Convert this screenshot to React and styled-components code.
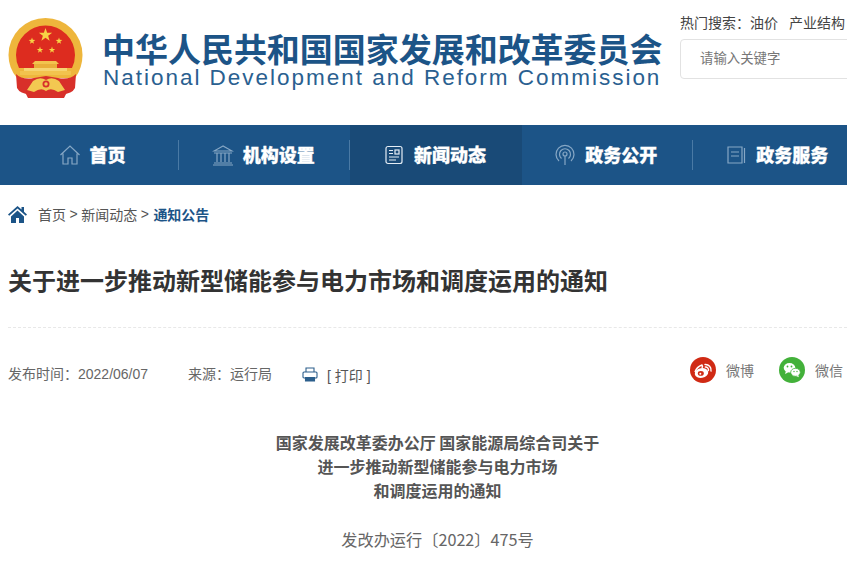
import React from 'react';
import styled, { createGlobalStyle } from 'styled-components';

const CJK = '"Noto Sans CJK SC", "Liberation Sans", sans-serif';
const Global = createGlobalStyle`
  html, body { margin: 0; padding: 0; background: #fff; }
  body { font-family: ${CJK}; overflow: hidden; }
`;
const Page = styled.div`width: 847px; height: 564px; overflow: hidden; background: #fff;`;
const Header = styled.header`display: flex; width: 1000px; height: 125px; box-sizing: border-box; padding: 18px 0 0 8px;`;
const Emblem = styled.svg`width: 76px; height: 81px; flex: none;`;
const Brand = styled.div`margin-left: 18px; width: 578px; flex: none; padding-top: 12px;`;
const BrandCn = styled.div`font-size: 33px; line-height: 36px; height: 36px; font-weight: 700; color: #1c5487; white-space: nowrap; letter-spacing: -0.03px;`;
const BrandEn = styled.div`font-family: "Liberation Sans", sans-serif; font-size: 22.5px; line-height: 24px; color: #2a6090; white-space: nowrap; letter-spacing: 1.98px; padding-left: 1px;`;
const Side = styled.div`margin-top: -6px; flex: none; width: 300px;`;
const Hot = styled.div`font-size: 14px; line-height: 20px; color: #444; white-space: nowrap; display: flex; gap: 11px;`;
const Search = styled.div`margin-top: 7px; width: 260px; height: 40px; box-sizing: border-box; border: 1px solid #e2e2e2; border-radius: 4px; padding-left: 19px; font-size: 13.400px; line-height: 34px; color: #777;`;
const Nav = styled.nav`display: flex; height: 60px; background: #1c5487; padding-left: 8px; width: 1000px; box-sizing: border-box;`;
const NavItem = styled.div`
  position: relative; width: 171.200px; height: 60px; padding: 0 3px 2px 0; box-sizing: border-box; flex: none; display: flex; align-items: center; justify-content: center; gap: 9px;
  background: ${p => p.$active ? '#194a77' : 'transparent'};
  color: #fff; font-size: 18px; font-weight: 900; -webkit-text-stroke: 0.3px #fff;
  &::after { content: ''; display: ${p => p.$line ? 'block' : 'none'}; position: absolute; right: 0; top: 15px; height: 30px; width: 1px; background: #4a7aa5; }
`;
const NavIcon = styled.svg`width: 22px; height: 22px; flex: none; fill: none; stroke: ${p => p.$bright ? '#e4edf5' : '#86a7c5'}; stroke-width: 1.2; margin-top: 2px;`;
const Crumbs = styled.div`display: flex; align-items: center; padding-left: 8px; height: 20px; margin-top: 19px; font-size: 14px; color: #555; white-space: nowrap;`;
const HomeIcon = styled.svg`width: 19px; height: 17px; fill: #1c5487; margin-right: 11px;`;
const Current = styled.b`color: #1c5487; font-weight: 700; margin-left: 1px;`;
const Sep = styled.span`margin: 0 3.500px; font-family: "Liberation Sans", sans-serif;`;
const Title = styled.h1`margin: 41px 0 0 8px; font-size: 24px; line-height: 30px; font-weight: 700; color: #333; white-space: nowrap; height: 30px;`;
const Rule = styled.div`margin: 32px 0 0 8px; border-top: 1px dashed #e8e8e8;`;
const Meta = styled.div`display: flex; align-items: center; width: 847px; height: 40px; margin-top: 25px; padding-left: 8px; box-sizing: border-box; font-size: 14px; color: #666; white-space: nowrap;`;
const Num = styled.span`font-family: "Liberation Sans", ${CJK};`;
const Source = styled.span`margin-left: 40px;`;
const PrintBtn = styled.span`display: flex; align-items: center; margin-left: 30px; padding-top: 3px; gap: 9px; color: #555;`;
const PrintIcon = styled.svg`width: 16px; height: 15px; fill: none; stroke: #2c5f8c; stroke-width: 1.100;`;
const Share = styled.div`margin-left: auto; display: flex; align-items: center; gap: 25px; margin-right: 4px; margin-top: -6px;`;
const ShareItem = styled.span`display: flex; align-items: center; gap: 10px; color: #777;`;
const Circle = styled.svg`width: 26px; height: 26px;`;
const Article = styled.article`width: 859px; margin: 37px 0 0 8px; text-align: center; color: #555;`;
const Heading = styled.div`font-size: 16px; line-height: 24px; font-weight: 700; white-space: nowrap;`;
const DocNo = styled.div`margin-top: 25px; font-size: 16.200px; line-height: 24px; color: #666; white-space: nowrap;`;

const Star = ({ x, y, r, fill = '#f7d345' }) => {
  const pts = [];
  for (let i = 0; i < 10; i++) {
    const a = -Math.PI / 2 + (i * Math.PI) / 5;
    const q = i % 2 ? r * 0.4 : r;
    pts.push(`${(x + q * Math.cos(a)).toFixed(2)},${(y + q * Math.sin(a)).toFixed(2)}`);
  }
  return <polygon points={pts.join(' ')} fill={fill} />;
};

const NationalEmblem = () => (
  <Emblem viewBox="0 0 76 81">
    <path d="M0.500 37 A37 37 0 0 1 74.500 37 Q74.500 50 67 60 L9 60 Q0.500 50 0.500 37Z" fill="#eeb63c" />
    <path d="M8 37 A29.500 29.500 0 0 1 67 37 Q67 44 64 50 H11 Q8 44 8 37Z" fill="#dd2c1f" />
    <Star x={37.500} y={17} r={7} />
    <Star x={24} y={23} r={3.500} />
    <Star x={51} y={23} r={3.500} />
    <Star x={32} y={32} r={3.400} />
    <Star x={44} y={32} r={3.400} />
    <path d="M27 43h21l3 3H24z" fill="#f2c34e" />
    <rect x="26" y="46" width="23" height="4" fill="#e9ae3a" />
    <rect x="16" y="50" width="43" height="3" fill="#f6d472" />
    <rect x="12" y="53" width="51" height="4" fill="#f2c34e" />
    <path d="M8 56 Q14 62 26 60 L38 58 L50 60 Q62 62 68 56 L67 70 Q64 76 54 76 L38 78 L22 76 Q12 76 9 70Z" fill="#d8302a" />
    <path d="M25 63 Q32 58 38 62 Q44 58 51 63 L57 72 L50 74 Q43 69 38 73 Q33 69 26 74 L19 72Z" fill="#f3c851" />
    <circle cx="38" cy="66" r="3.500" fill="#d8302a" />
    <circle cx="38" cy="66" r="1.700" fill="#f3c851" />
    <path d="M17 74 L28 76 L38 74 L48 76 L59 74 L56 80 L20 80Z" fill="#d8302a" />
  </Emblem>
);

const Weibo = () => (
  <Circle viewBox="0 0 26 26">
    <circle cx="13" cy="13" r="13" fill="#d02a14" />
    <ellipse cx="11.500" cy="16" rx="6.800" ry="4.800" fill="#fff" transform="rotate(-10 11.500 16)" />
    <ellipse cx="10.800" cy="16.400" rx="3" ry="2.300" fill="#d02a14" />
    <circle cx="10.300" cy="16.700" r="1" fill="#fff" />
    <path d="M15 7.500a5.500 5.500 0 0 1 6 6.500M15.300 10a3 3 0 0 1 3.200 3.500" fill="none" stroke="#fff" strokeWidth="1.400" strokeLinecap="round" />
    <path d="M5 15c1-3 4-6 7-7 1 1 0 3 0 3" fill="none" stroke="#fff" strokeWidth="1.500" />
  </Circle>
);
const Wechat = () => (
  <Circle viewBox="0 0 26 26">
    <circle cx="13" cy="13" r="13" fill="#43b13a" />
    <ellipse cx="10.500" cy="10.800" rx="5.800" ry="4.800" fill="#fff" />
    <path d="M7 14l-1 3 3-1.500z" fill="#fff" />
    <ellipse cx="16.500" cy="15.300" rx="4.800" ry="4" fill="#fff" stroke="#43b13a" strokeWidth="0.800" />
    <path d="M19 18l1 2.300-2.800-1.300z" fill="#fff" />
    <circle cx="8.500" cy="9.500" r="0.900" fill="#43b13a" />
    <circle cx="12.500" cy="9.500" r="0.900" fill="#43b13a" />
    <circle cx="15" cy="14.500" r="0.700" fill="#43b13a" />
    <circle cx="18" cy="14.500" r="0.700" fill="#43b13a" />
  </Circle>
);

export default function App() {
  return (
    <Page>
      <Global />
      <Header>
        <NationalEmblem />
        <Brand>
          <BrandCn>中华人民共和国国家发展和改革委员会</BrandCn>
          <BrandEn>National Development and Reform Commission</BrandEn>
        </Brand>
        <Side>
          <Hot><span>热门搜索：油价</span><span>产业结构</span></Hot>
          <Search>请输入关键字</Search>
        </Side>
      </Header>
      <Nav>
        <NavItem $line>
          <NavIcon viewBox="0 0 22 22"><path d="M1.500 11 11 2l9.500 9M4 9.500V20h5v-6h4v6h5V9.500" /></NavIcon>
          首页
        </NavItem>
        <NavItem $line>
          <NavIcon viewBox="0 0 22 22"><path d="M11 2 2 7h18zM2 9h18M5 9v9M9 9v9M13 9v9M17 9v9M2 19h18M1 21h20" /></NavIcon>
          机构设置
        </NavItem>
        <NavItem $active>
          <NavIcon $bright viewBox="0 0 22 22"><rect x="3" y="2.500" width="16" height="17" rx="2" /><path d="M6 6.500h4M6 9.500h4M6 13h10M6 16h7" /><rect x="12" y="6" width="4" height="4" /></NavIcon>
          新闻动态
        </NavItem>
        <NavItem $line>
          <NavIcon viewBox="0 0 22 22"><path d="M5 17a9 9 0 1 1 12 0M7.500 14.500a5.500 5.500 0 1 1 7 0" /><circle cx="11" cy="10" r="2" /><path d="M11 12v9" /></NavIcon>
          政务公开
        </NavItem>
        <NavItem>
          <NavIcon viewBox="0 0 22 22"><path d="M3 3h14v16H3zM19.500 4v15M6 8h8M6 12h8" /></NavIcon>
          政务服务
        </NavItem>
      </Nav>
      <Crumbs>
        <HomeIcon viewBox="0 0 19 17"><path d="M9.500 0 0 8.500l1.200 1.300L9.500 2.500l8.300 7.300L19 8.500l-3-2.700V1h-2.500v2.600zM3 10.500V17h5v-5h3v5h5v-6.500L9.500 4.500z" /></HomeIcon>
        首页<Sep>&gt;</Sep>新闻动态<Sep>&gt;</Sep><Current>通知公告</Current>
      </Crumbs>
      <Title>关于进一步推动新型储能参与电力市场和调度运用的通知</Title>
      <Rule />
      <Meta>
        <span>发布时间：<Num>2022/06/07</Num></span>
        <Source>来源：运行局</Source>
        <PrintBtn>
          <PrintIcon viewBox="0 0 16 15"><path d="M4 5V1h8v4M3.500 11H2a1 1 0 0 1-1-1V6a1 1 0 0 1 1-1h12a1 1 0 0 1 1 1v4a1 1 0 0 1-1 1h-1.500" /><path d="M3.500 10.500h9v3.500h-9z" fill="#2c5f8c" /></PrintIcon>
          <Num>[ 打印 ]</Num>
        </PrintBtn>
        <Share>
          <ShareItem><Weibo />微博</ShareItem>
          <ShareItem><Wechat />微信</ShareItem>
        </Share>
      </Meta>
      <Article>
        <Heading>国家发展改革委办公厅 国家能源局综合司关于</Heading>
        <Heading>进一步推动新型储能参与电力市场</Heading>
        <Heading>和调度运用的通知</Heading>
        <DocNo>发改办运行〔2022〕475号</DocNo>
      </Article>
    </Page>
  );
}
